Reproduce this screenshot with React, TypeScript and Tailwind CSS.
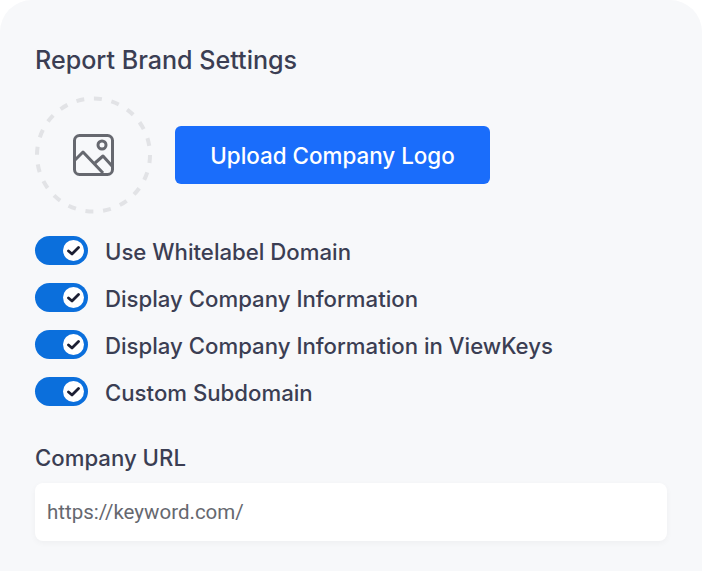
const toggles = [
  "Use Whitelabel Domain",
  "Display Company Information",
  "Display Company Information in ViewKeys",
  "Custom Subdomain",
];

function Toggle() {
  return (
    <div className="flex h-[29px] w-[53px] items-center justify-end rounded-full bg-[#0b6fdc] pr-[4px]">
      <div className="flex h-[21px] w-[21px] items-center justify-center rounded-full bg-white">
        <svg width="13" height="10" viewBox="0 0 13 10" fill="none">
          <path d="M1.5 5 L5 8 L11.5 1.5" stroke="#1c1f33" strokeWidth="2.8" strokeLinecap="round" strokeLinejoin="round" />
        </svg>
      </div>
    </div>
  );
}

function LogoPlaceholder() {
  return (
    <svg width="117" height="118" viewBox="0 0 117 118" fill="none">
      <circle cx="58.5" cy="59" r="56.5" stroke="#e2e3e6" strokeWidth="4" strokeDasharray="8 9.75" />
      <rect x="39.5" y="39.5" width="38" height="39" rx="5" stroke="#66686f" strokeWidth="3" />
      <circle cx="67" cy="49" r="4" stroke="#66686f" strokeWidth="3" />
      <path d="M40 64 L48 56 L68 77" stroke="#66686f" strokeWidth="3" strokeLinejoin="round" />
      <path d="M60 67 L68 60 L77 70" stroke="#66686f" strokeWidth="3" strokeLinejoin="round" />
    </svg>
  );
}

export default function App() {
  return (
    <div className="h-[571px] w-[702px] rounded-t-[32px] bg-[#f7f8fa] px-[35px] pt-[43px] font-['Inter',sans-serif] text-[#3b3e53]">
      <h2 className="text-[25.1px] leading-[34px] font-medium">Report Brand Settings</h2>

      <div className="mt-[19px] flex items-center gap-[23px]">
        <LogoPlaceholder />
        <button className="flex h-[58px] w-[315px] items-center justify-center rounded-md bg-[#1a6dfb] pt-[2px] text-[22.4px] font-medium text-white">
          Upload Company Logo
        </button>
      </div>

      <div className="mt-[22px] flex flex-col gap-[18px]">
        {toggles.map((label) => (
          <div key={label} className="flex items-center gap-[17px]">
            <Toggle />
            <span className="translate-y-[1px] text-[22.2px] leading-[29px] font-medium">{label}</span>
          </div>
        ))}
      </div>

      <div className="mt-[37px] text-[22.2px] leading-[30px] font-medium">Company URL</div>
      <div className="mt-[10px] flex h-[58px] w-[632px] items-center rounded-lg bg-white px-3 font-['Roboto',sans-serif] text-[20.5px] text-[#66686f] shadow-[0_2px_6px_rgba(0,0,0,0.04)]">
        https://keyword.com/
      </div>
    </div>
  );
}
